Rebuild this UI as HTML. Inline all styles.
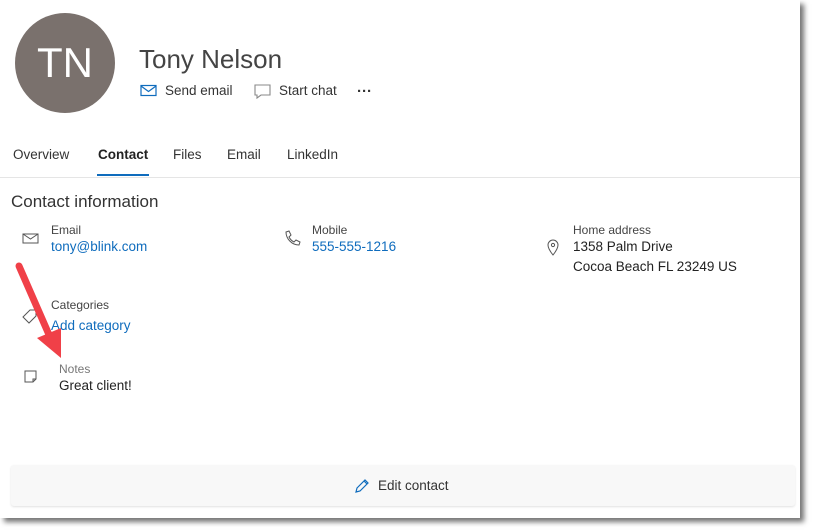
<!DOCTYPE html><html><head><style>
body{margin:0;width:814px;height:531px;background:#fff;font-family:"Liberation Sans",sans-serif;position:relative;overflow:hidden}
.frame{position:absolute;left:0;top:0;width:800px;height:518px;background:#fff;box-shadow:4px 4px 5px rgba(0,0,0,.55)}
.a{position:absolute;white-space:nowrap}
.lbl{font-size:12px;color:#444}
.val{font-size:13.5px;color:#222}
.link{font-size:13.5px;color:#0f6cbd}
</style></head><body><div class="frame">
<div class="a" style="left:15px;top:13px;width:100px;height:100px;border-radius:50%;background:#7a716d;color:#fff;font-size:42px;line-height:100px;text-align:center">TN</div>
<div class="a" style="left:139px;top:44px;font-size:26px;color:#444">Tony Nelson</div>
<svg class="a" style="left:140px;top:84px" width="18" height="14"><rect x="1" y="1.5" width="15" height="10" fill="none" stroke="#0f6cbd" stroke-width="1.2"/><path d="M1 2l7.5 5.5L16 2" fill="none" stroke="#0f6cbd" stroke-width="1.2"/></svg>
<div class="a" style="left:165px;top:83px;font-size:13.5px;color:#333">Send email</div>
<svg class="a" style="left:254px;top:84px" width="18" height="16"><path d="M1 1h15v10H7l-4 3v-3H1z" fill="none" stroke="#888" stroke-width="1.1"/></svg>
<div class="a" style="left:279px;top:83px;font-size:13.5px;color:#333">Start chat</div>
<div class="a" style="left:357px;top:83px;font-size:15px;color:#333;font-weight:bold">···</div>
<div class="a" style="left:13px;top:147px;font-size:13.5px;color:#333">Overview</div>
<div class="a" style="left:98px;top:147px;font-size:13.5px;color:#222;font-weight:bold">Contact</div>
<div class="a" style="left:97px;top:174px;width:52px;height:2px;background:#0f6cbd"></div>
<div class="a" style="left:173px;top:147px;font-size:13.5px;color:#333">Files</div>
<div class="a" style="left:227px;top:147px;font-size:13.5px;color:#333">Email</div>
<div class="a" style="left:287px;top:147px;font-size:13.5px;color:#333">LinkedIn</div>
<div class="a" style="left:0;top:177px;width:800px;height:1px;background:#e5e5e5"></div>
<div class="a" style="left:11px;top:192px;font-size:17px;color:#333">Contact information</div>
<svg class="a" style="left:22px;top:233px" width="18" height="12"><rect x="1" y="1" width="15" height="9" fill="none" stroke="#555"/><path d="M1 1l7.5 5L16 1" fill="none" stroke="#555"/></svg>
<div class="a lbl" style="left:51px;top:223px">Email</div>
<div class="a link" style="left:51px;top:239px">tony@blink.com</div>
<svg class="a" style="left:283px;top:230px" width="18" height="18"><path d="M3 2l3-1 2 4-2 2c1 2 3 4 5 5l2-2 4 2-1 3C9 15 3 9 3 2z" fill="none" stroke="#555"/></svg>
<div class="a lbl" style="left:312px;top:223px">Mobile</div>
<div class="a link" style="left:312px;top:239px">555-555-1216</div>
<svg class="a" style="left:546px;top:239px" width="14" height="18"><path d="M7 16C3 11 2 8 2 6a5 5 0 0110 0c0 2-1 5-5 10z" fill="none" stroke="#555"/><circle cx="7" cy="6" r="1.6" fill="none" stroke="#555"/></svg>
<div class="a lbl" style="left:573px;top:223px">Home address</div>
<div class="a val" style="left:573px;top:239px">1358 Palm Drive</div>
<div class="a val" style="left:573px;top:259px">Cocoa Beach FL 23249 US</div>
<svg class="a" style="left:22px;top:309px" width="16" height="16"><path d="M1 8l7-7h6v6l-7 7z" fill="none" stroke="#555"/></svg>
<div class="a lbl" style="left:51px;top:298px">Categories</div>
<div class="a link" style="left:51px;top:318px">Add category</div>
<svg class="a" style="left:24px;top:370px" width="14" height="14"><path d="M1 1h11v8l-3 3H1z M9 12V9h3" fill="none" stroke="#555"/></svg>
<div class="a lbl" style="left:59px;top:362px;color:#777">Notes</div>
<div class="a val" style="left:59px;top:378px">Great client!</div>
<svg class="a" style="left:0;top:0" width="120" height="400"><line x1="19" y1="266" x2="50" y2="337" stroke="#f04048" stroke-width="7" stroke-linecap="round"/><path d="M37 338l24 20 0-30z" fill="#f04048"/></svg>
<div class="a" style="left:11px;top:465px;width:784px;height:41px;background:#f8f8f8;border-radius:3px;box-shadow:0 1px 2px rgba(0,0,0,.12)"></div>
<svg class="a" style="left:354px;top:478px" width="16" height="16"><path d="M2 14l1-4 8-8 3 3-8 8z M10 3l3 3" fill="none" stroke="#0f6cbd" stroke-width="1.2"/></svg>
<div class="a" style="left:378px;top:478px;font-size:13.5px;color:#333">Edit contact</div>
</div></body></html>
